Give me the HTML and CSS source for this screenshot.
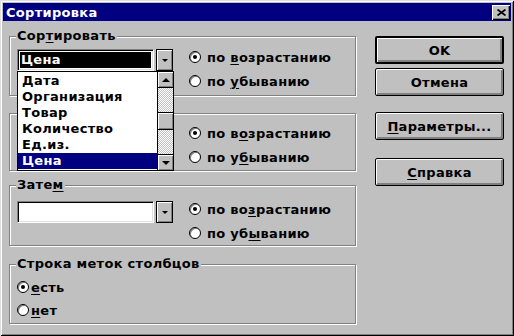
FILE: index.html
```html
<!DOCTYPE html>
<html lang="ru">

<head>
  <meta charset="UTF-8">
  <title>Сортировка</title>
  <link rel="stylesheet" href="styles.css">
</head>

<body>
  <div class="window">
    <div class="titlebar">
      <span class="title">Сортировка</span>
      <span class="close">
        <svg width="9" height="7" viewBox="0 0 9 7"><path d="M0.5 0.5 L8.5 6.5 M8.5 0.5 L0.5 6.5" stroke="#000" stroke-width="1.7" fill="none"/></svg>
      </span>
    </div>

    <div class="content">
      <div class="groups">
        <div class="group g1">
          <span class="legend">Сор<u>т</u>ировать</span>
          <div class="combo">
            <div class="field"><span class="hl">Цена</span></div>
            <div class="drop-btn"><i class="tri-down"></i></div>
          </div>
          <div class="radios">
            <label class="radio"><span class="dot on"></span><span>по <u>в</u>озрастанию</span></label>
            <label class="radio"><span class="dot"></span><span>по <u>у</u>быванию</span></label>
          </div>
        </div>

        <!-- label and combo of this group are hidden under the open list -->
        <div class="group g2">
          <div class="combo">
            <div class="field"></div>
            <div class="drop-btn"><i class="tri-down"></i></div>
          </div>
          <div class="radios">
            <label class="radio"><span class="dot on"></span><span>по в<u>о</u>зрастанию</span></label>
            <label class="radio"><span class="dot"></span><span>по у<u>б</u>ыванию</span></label>
          </div>
        </div>

        <div class="group g3">
          <span class="legend">Зате<u>м</u></span>
          <div class="combo">
            <div class="field"></div>
            <div class="drop-btn"><i class="tri-down"></i></div>
          </div>
          <div class="radios">
            <label class="radio"><span class="dot on"></span><span>по во<u>з</u>растанию</span></label>
            <label class="radio"><span class="dot"></span><span>по уб<u>ы</u>ванию</span></label>
          </div>
        </div>

        <div class="group g4">
          <span class="legend">Строка меток столбцов</span>
          <div class="radios">
            <label class="radio"><span class="dot on"></span><span><u>е</u>сть</span></label>
            <label class="radio"><span class="dot"></span><span><u>н</u>ет</span></label>
          </div>
        </div>
      </div>

      <div class="buttons">
        <div class="btn default">OK</div>
        <div class="btn cancel">Отмена</div>
        <div class="btn options"><span><u>П</u>араметры...</span></div>
        <div class="btn help"><span><u>С</u>правка</span></div>
      </div>
    </div>

    <!-- open dropdown of the first combo -->
    <div class="droplist">
      <div class="items">
        <div class="item">Дата</div>
        <div class="item">Организация</div>
        <div class="item">Товар</div>
        <div class="item">Количество</div>
        <div class="item">Ед.из.</div>
        <div class="item sel">Цена</div>
      </div>
      <div class="scroll">
        <div class="sb-btn sb-up"><i class="tri-up"></i></div>
        <div class="thumb"></div>
        <div class="sb-btn sb-down"><i class="tri-down big"></i></div>
      </div>
    </div>
  </div>
</body>

</html>
```

FILE: styles.css
```css
* {
  margin: 0;
  padding: 0;
  box-sizing: border-box;
}

body {
  font-family: "DejaVu Sans", "Liberation Sans", sans-serif;
  font-weight: bold;
  font-size: 13px;
  letter-spacing: 0.3px;
  color: #000;
  background-color: #c0c0c0;
}

u {
  text-decoration-thickness: 1px;
  text-underline-offset: 2px;
}

.window {
  position: relative;
  width: 514px;
  height: 336px;
  padding: 3px;
  background-color: #c0c0c0;
  box-shadow: inset 1px 1px 0 #dfdfdf, inset -1px -1px 0 #000,
    inset 2px 2px 0 #fff, inset -2px -2px 0 #808080;
}

.titlebar {
  height: 18px;
  background-color: #000080;
  color: #fff;
  display: flex;
  align-items: center;
  justify-content: space-between;
  padding: 0 1px 0 3px;
}

.close {
  width: 18px;
  height: 15px;
  background-color: #c0c0c0;
  box-shadow: inset 1px 1px 0 #fff, inset -1px -1px 0 #000, inset -2px -2px 0 #808080;
  display: flex;
  align-items: center;
  justify-content: center;
}

.close svg {
  display: block;
}

.content {
  display: flex;
  padding: 15px 6px 0 6px;
}

.groups {
  width: 347px;
}

/* etched group box */
.group {
  position: relative;
  display: flex;
  padding-left: 7px;
  border: 1px solid #808080;
  box-shadow: inset 1px 1px 0 #fff, 1px 1px 0 #fff;
}

.g1 {
  height: 60px;
  padding-top: 12px;
}

.g2 {
  height: 58px;
  margin-top: 17px;
  padding-top: 11px;
}

.g3 {
  height: 61px;
  margin-top: 14px;
  padding-top: 15px;
}

.g4 {
  height: 60px;
  margin-top: 18px;
  padding-top: 14px;
}

.legend {
  position: absolute;
  top: -9px;
  left: 6px;
  padding: 0 1px;
  line-height: 16px;
  background-color: #c0c0c0;
}

.combo {
  display: flex;
  gap: 2px;
  height: 22px;
}

.field {
  width: 137px;
  height: 22px;
  background-color: #fff;
  border: 1px solid;
  border-color: #808080 #fff #fff #808080;
  box-shadow: inset 1px 1px 0 #000, inset -1px -1px 0 #dfdfdf;
  padding: 2px;
}

.hl {
  display: block;
  height: 16px;
  line-height: 16px;
  padding-left: 1px;
  background-color: #000;
  color: #fff;
}

.drop-btn {
  width: 17px;
  height: 22px;
  border: 1px solid #000;
  background-color: #c0c0c0;
  box-shadow: inset 1px 1px 0 #fff, inset -1px -1px 0 #808080;
  display: flex;
  align-items: center;
  justify-content: center;
}

.tri-down {
  display: block;
  width: 0;
  height: 0;
  border-left: 3px solid transparent;
  border-right: 3px solid transparent;
  border-top: 3px solid #000;
}

.tri-down.big {
  border-left-width: 4px;
  border-right-width: 4px;
  border-top-width: 4px;
}

.tri-up {
  display: block;
  width: 0;
  height: 0;
  border-left: 4px solid transparent;
  border-right: 4px solid transparent;
  border-bottom: 4px solid #000;
}

.radios {
  display: flex;
  flex-direction: column;
  gap: 8px;
  margin-left: 16px;
}

.radio {
  display: flex;
  align-items: center;
  gap: 6px;
  height: 16px;
  white-space: nowrap;
}

.g4 .radios {
  margin-left: 0;
  gap: 7px;
}

.g4 .radio {
  gap: 2px;
}

.dot {
  position: relative;
  flex: none;
  width: 12px;
  height: 12px;
  border-radius: 50%;
  background-color: #fff;
  border: 1px solid #000;
  box-shadow: inset 1px 1px 0 #808080;
}

.dot.on::after {
  content: "";
  position: absolute;
  left: 3px;
  top: 3px;
  width: 4px;
  height: 4px;
  border-radius: 50%;
  background-color: #000;
}

.buttons {
  display: flex;
  flex-direction: column;
  width: 129px;
  margin-left: 19px;
}

.btn {
  height: 28px;
  border: 1px solid #000;
  border-radius: 2px;
  background-color: #c0c0c0;
  box-shadow: inset 1px 1px 0 #fff, inset -1px -1px 0 #808080, inset -2px -2px 0 #808080;
  display: flex;
  align-items: center;
  justify-content: center;
}

.btn.default {
  border-width: 2px;
}

.cancel {
  margin-top: 4px;
}

.options {
  margin-top: 16px;
}

.help {
  margin-top: 18px;
}

/* open list of the first combo, drawn over the second group */
.droplist {
  position: absolute;
  left: 17px;
  top: 71px;
  width: 157px;
  height: 100px;
  border: 1px solid #000;
  background-color: #fff;
  display: flex;
}

.items {
  flex: 1;
  padding-top: 1px;
}

.item {
  height: 16px;
  line-height: 16px;
  padding-left: 4px;
}

.item.sel {
  background-color: #000080;
  color: #fff;
}

.scroll {
  width: 16px;
  border-left: 1px solid #000;
  display: flex;
  flex-direction: column;
  background: repeating-conic-gradient(#c0c0c0 0 25%, #fff 0 50%) 0 0 / 2px 2px;
}

.sb-btn {
  background-color: #c0c0c0;
  box-shadow: inset 1px 1px 0 #fff, inset -1px -1px 0 #808080;
  display: flex;
  align-items: center;
  justify-content: center;
}

.sb-up {
  height: 16px;
  border-bottom: 1px solid #000;
}

.thumb {
  height: 18px;
  margin-top: 24px;
  border-top: 1px solid #000;
  border-bottom: 1px solid #000;
  background-color: #c0c0c0;
  box-shadow: inset 1px 1px 0 #fff, inset -1px -1px 0 #808080;
}

.sb-down {
  height: 16px;
  margin-top: auto;
  border-top: 1px solid #000;
}
```
